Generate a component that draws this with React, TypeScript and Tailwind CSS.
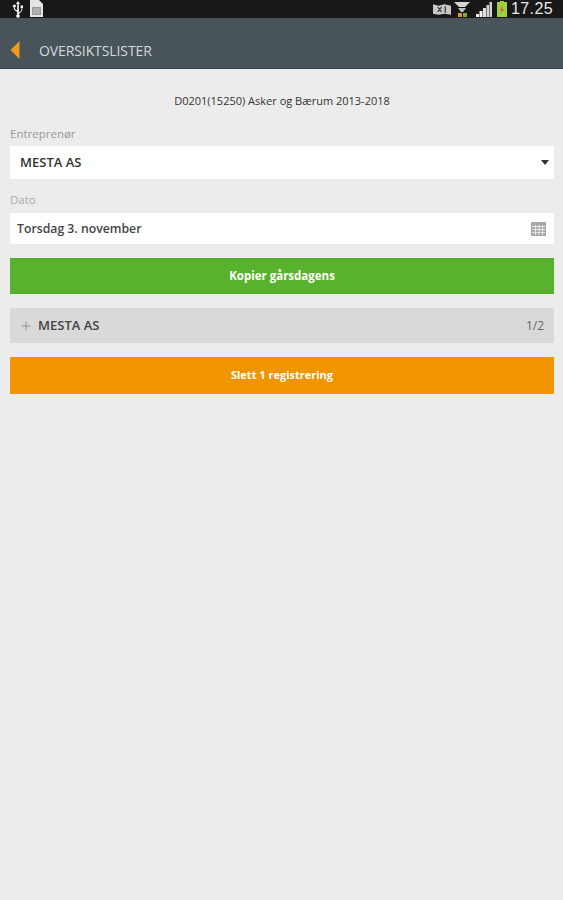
import React from 'react';
import { Plus } from 'lucide-react';

const UsbIcon = () => (
  <svg width="12" height="17" viewBox="0 0 12 17" className="text-white">
    <path d="M6 0 L8 3 H6.8 V11 C6.8 12 9.5 10.5 9.5 8 V7 H8.6 V4.5 H11 V7 H10.3 V8 C10.3 11 7 12.5 6.8 13 V14 H5.2 V11 C4 10 1.8 9.5 1.8 7 V6.4 C1 6 .8 5.5 .8 5 A1.6 1.6 0 0 1 4 5 C4 5.5 3.6 6 2.8 6.4 V7 C2.8 8.5 4.5 9 5.2 9.5 V3 H4 Z" fill="currentColor" />
    <circle cx="6" cy="15" r="1.8" fill="currentColor" />
  </svg>
);

const StatusBar = () => (
  <div className="h-[18px] bg-[#181818] flex items-center justify-between pl-3 pr-[10px] overflow-hidden">
    <div className="flex items-center gap-[5px]">
      <UsbIcon />
      <svg width="14" height="18" viewBox="0 0 14 18">
        <path d="M1 0 H10 L14 4 V17 H1 Z" fill="#e4e4e4" />
        <rect x="3" y="7" width="9" height="8" fill="#9a9a9a" />
        <path d="M4 9 H11 M4 11 H11 M4 13 H11" stroke="#cfcfcf" strokeWidth="0.8" />
      </svg>
    </div>
    <div className="flex items-center">
      <svg width="18" height="13" viewBox="0 0 19 13" className="mr-[3px]">
        <path d="M0 1 L6 2.5 L12 1 L19 2.5 V12 L12 11 L6 12 L0 11 Z" fill="#c8c8c8" />
        <path d="M5 4 L9 9 M9 4 L5 9 M13 3 V10" stroke="#444" strokeWidth="1.5" />
      </svg>
      <svg width="16" height="17" viewBox="0 0 16 17" className="mr-[6px]">
        <path d="M0 1 H16 L11 6 H5 Z" fill="#d5d5d5" />
        <path d="M4 7 H12 L9 11 H7 Z" fill="#bdbdbd" />
        <rect x="4" y="12" width="4" height="4" fill="#d99a2b" />
        <rect x="9" y="12" width="4" height="4" fill="#7fb02c" />
      </svg>
      <svg width="16" height="15" viewBox="0 0 16 15" className="mr-[5px]">
        <rect x="0" y="12" width="3" height="3" fill="#f2f2f2" />
        <rect x="3.5" y="9" width="3" height="6" fill="#f2f2f2" />
        <rect x="7" y="6" width="3" height="9" fill="#e0e0e0" />
        <rect x="10.5" y="3" width="2.5" height="12" fill="#d4d4d4" />
        <rect x="13.5" y="0" width="2.5" height="15" fill="#d4d4d4" />
      </svg>
      <svg width="10" height="16" viewBox="0 0 10 16" className="mr-[4px]">
        <rect x="0" y="1" width="10" height="15" fill="#9fd13a" />
        <rect x="3" y="0" width="4" height="2" fill="#9fd13a" />
        <path d="M6 4 L3 9 H5 L4 13 L7 8 H5 Z" fill="#d9534f" />
      </svg>
      <span className="font-['Liberation_Sans',sans-serif] text-[16px] leading-[18px] tracking-[0.4px] text-[#e8e8e8]">17.25</span>
    </div>
  </div>
);

const Header = () => (
  <div className="h-[51px] bg-[#49535a] border-b border-[#2f4454] flex items-center pl-[10px] pt-[14px]">
    <svg width="10" height="18" viewBox="0 0 10 18" className="mr-[19px]">
      <path d="M9.5 0 V18 L0.5 9 Z" fill="#ee9a1c" />
    </svg>
    <span className="text-[14px] text-[#d3dadd] tracking-[-0.1px]">OVERSIKTSLISTER</span>
  </div>
);

const App: React.FC = () => {
  return (
    <div className="min-h-[900px] bg-[#ececec] font-['Open_Sans','Noto_Sans',sans-serif]">
      <StatusBar />
      <Header />

      <div className="pl-[10px] pr-[9px]">
        <div className="text-center text-[11px] leading-[14px] text-[#333] pt-[25px]">
          D0201(15250) Asker og Bærum 2013-2018
        </div>

        <div className="text-[11.5px] leading-[16px] text-[#999] mt-[18px]">Entreprenør</div>
        <div className="h-[33px] bg-white flex items-center justify-between mt-[4px] pl-[10px] pr-[5px]">
          <span className="text-[13px] font-semibold text-[#333]">MESTA AS</span>
          <svg width="8" height="5" viewBox="0 0 8 5">
            <path d="M0 0 H8 L4 5 Z" fill="#333" />
          </svg>
        </div>

        <div className="text-[11.5px] leading-[16px] text-[#aaa] mt-[13px]">Dato</div>
        <div className="h-[31px] bg-white flex items-center justify-between mt-[5px] pl-[7px] pr-[8px]">
          <span className="text-[12.25px] font-semibold text-[#444] pt-[1px]">Torsdag 3. november</span>
          <svg width="15" height="14" viewBox="0 0 15 14">
            <rect width="15" height="14" fill="#a8a8a8" />
            <path d="M1 4.5 H14 M1 7.5 H14 M1 10.5 H14 M4.5 3 V13 M8 3 V13 M11.5 3 V13" stroke="#e6e6e6" strokeWidth="1" />
          </svg>
        </div>

        <button className="w-full h-[36px] mt-[14px] bg-[#59b22d] border-y border-[#4fae1e] text-white text-[11.5px] font-bold flex items-center justify-center">
          Kopier gårsdagens
        </button>

        <div className="h-[35px] mt-[14px] bg-[#d9d9d9] flex items-center justify-between pl-[9px] pr-[10px]">
          <div className="flex items-center">
            <Plus size={14} strokeWidth={1.25} className="text-[#777] mr-[5px]" />
            <span className="text-[13px] font-semibold text-[#444]">MESTA AS</span>
          </div>
          <span className="text-[12px] text-[#666]">1/2</span>
        </div>

        <button className="w-full h-[37px] mt-[14px] bg-[#f09500] text-white text-[11px] font-bold flex items-center justify-center">
          Slett 1 registrering
        </button>
      </div>
    </div>
  );
};

export default App;
